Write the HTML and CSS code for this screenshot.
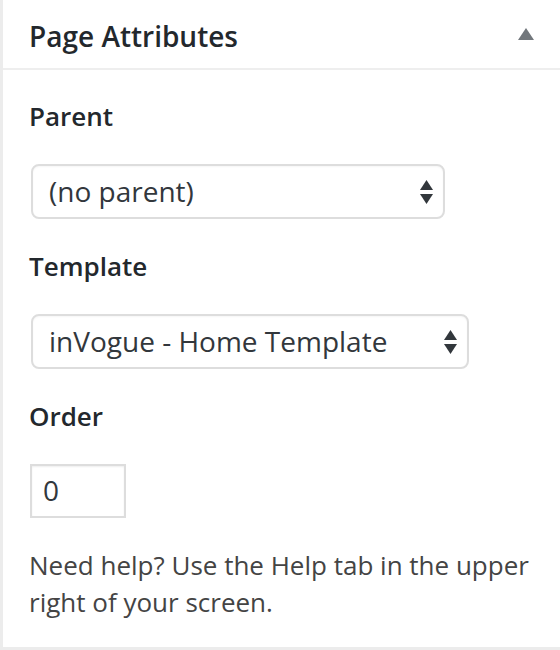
FILE: index.html
```html
<!DOCTYPE html>
<html lang="en">
<head>
<meta charset="utf-8">
<title>Page Attributes</title>
<link rel="stylesheet" href="styles.css">
</head>
<body>
<div class="postbox">
  <div class="postbox-header">
    <h2 class="hndle">Page Attributes</h2>
    <svg class="toggle" width="16" height="12" viewBox="0 0 16 12" aria-hidden="true"><polygon points="8,0 16,12 0,12" fill="#72777c"/></svg>
  </div>
  <div class="inside">
    <p class="label">Parent</p>
    <div class="select select-parent">
      <span class="select-text">(no parent)</span>
      <svg class="arrows" width="13" height="24" viewBox="0 0 13 24" aria-hidden="true"><polygon points="6.5,0 13,10 0,10" fill="#32373c"/><polygon points="0,14 13,14 6.5,24" fill="#32373c"/></svg>
    </div>
    <p class="label">Template</p>
    <div class="select select-template">
      <span class="select-text">inVogue - Home Template</span>
      <svg class="arrows" width="13" height="24" viewBox="0 0 13 24" aria-hidden="true"><polygon points="6.5,0 13,10 0,10" fill="#32373c"/><polygon points="0,14 13,14 6.5,24" fill="#32373c"/></svg>
    </div>
    <p class="label">Order</p>
    <div class="order-input">0</div>
    <p class="help">Need help? Use the Help tab in the upper right of your screen.</p>
  </div>
</div>
</body>
</html>
```
FILE: styles.css
```css
html, body {
  margin: 0;
  padding: 0;
  background: #ffffff;
}
body {
  font-family: "Open Sans", "Noto Sans", sans-serif;
  color: #23282d;
}
.postbox {
  box-sizing: border-box;
  width: 560px;
  height: 650px;
  background: #ffffff;
  border-left: 3px solid #ececec;
  border-bottom: 3px solid #ececec;
}
.postbox-header {
  display: flex;
  align-items: center;
  justify-content: space-between;
  height: 70px;
  padding: 0 26px 0 26px;
  border-bottom: 2px solid #eeeeee;
  box-sizing: border-box;
}
.hndle {
  margin: 0;
  font-size: 28px;
  font-weight: 600;
  line-height: 1.4;
  color: #23282d;
  padding-top: 6px;
}
.toggle {
  display: block;
  margin-top: 0;
}
.inside {
  padding: 0 26px 0 26px;
}
.label {
  margin: 0;
  font-size: 26px;
  font-weight: 600;
  line-height: 36px;
  color: #23282d;
}
.inside > .label:first-child {
  padding-top: 28px;
}
.select {
  box-sizing: border-box;
  display: flex;
  align-items: center;
  justify-content: space-between;
  height: 55px;
  margin: 30px 0 29px 2px;
  padding: 0 10px 0 16px;
  border: 2px solid #dddddd;
  border-radius: 8px;
  background: #ffffff;
  box-shadow: inset 0 1px 2px rgba(0,0,0,0.04);
}
.select-parent { width: 414px; }
.select-template { width: 438px; }
.select-text {
  font-size: 28px;
  line-height: 1;
  color: #32373c;
  padding-bottom: 2px;
}
.arrows { display: block; }
.order-input {
  box-sizing: border-box;
  width: 96px;
  height: 54px;
  margin: 30px 0 29px 1px;
  padding: 0 0 2px 11px;
  border: 2px solid #dddddd;
  display: flex;
  align-items: center;
  font-size: 28px;
  color: #32373c;
  box-shadow: inset 0 1px 2px rgba(0,0,0,0.07);
}
.help {
  margin: 0;
  font-size: 26px;
  line-height: 37px;
  color: #444444;
}
```
